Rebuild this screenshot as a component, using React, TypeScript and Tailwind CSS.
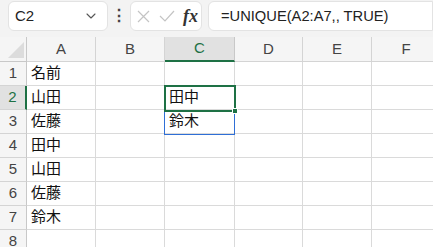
import { ChevronDown } from "lucide-react";

const COLS = [
  { key: "A", w: "w-[69px]" },
  { key: "B", w: "w-[69px]" },
  { key: "C", w: "w-[70px]" },
  { key: "D", w: "w-[68px]" },
  { key: "E", w: "w-[69px]" },
  { key: "F", w: "w-[69px]" },
];

const ROWS: Record<number, Record<string, string>> = {
  1: { A: "名前" },
  2: { A: "山田", C: "田中" },
  3: { A: "佐藤", C: "鈴木" },
  4: { A: "田中" },
  5: { A: "山田" },
  6: { A: "佐藤" },
  7: { A: "鈴木" },
  8: {},
};

const cellFont = {
  fontFamily: '"Noto Sans CJK JP", "Liberation Sans", sans-serif',
};

function FormulaBar() {
  return (
    <div className="h-[37px] bg-[#f3f3f3] flex items-start pt-px pl-2 gap-0">
      <div className="w-[100px] h-[30px] bg-white border border-[#e3e3e3] rounded-md flex items-center justify-between pl-[6px] pr-[8px]">
        <span className="text-[15px] text-[#222]">C2</span>
        <ChevronDown className="w-4 h-4 text-[#555]" strokeWidth={1.6} />
      </div>
      <div className="w-[22px] h-[30px] flex items-center justify-center text-[#444] text-[16px] font-bold leading-none">
        ⋮
      </div>
      <div className="w-[72px] h-[30px] bg-white border border-[#e3e3e3] rounded-md flex items-center pl-[6px] gap-[9px]">
        <svg width="13" height="13" viewBox="0 0 13 13" className="text-[#c4c4c4]">
          <path d="M1 1 L12 12 M12 1 L1 12" stroke="currentColor" strokeWidth="1.2" fill="none" />
        </svg>
        <svg width="16" height="12" viewBox="0 0 16 12" className="text-[#c4c4c4]">
          <path d="M1 6 L6 11 L15 1" stroke="currentColor" strokeWidth="1.2" fill="none" />
        </svg>
        <span
          className="text-[18px] italic font-semibold text-[#333] -ml-[1px] leading-none"
          style={{ fontFamily: '"Liberation Serif", serif' }}
        >
          fx
        </span>
      </div>
      <div className="ml-[6px] flex-1 h-[30px] bg-white border border-[#e3e3e3] rounded-l-md flex items-center pl-[12px]">
        <span className="text-[14.7px] text-[#222]">=UNIQUE(A2:A7,, TRUE)</span>
      </div>
    </div>
  );
}

function HeaderRow() {
  return (
    <div className="flex h-[25px] bg-[#f5f5f5]">
      <div className="w-[27px] shrink-0 border-r border-b border-[#c8c8c8] relative">
        <svg width="16" height="16" viewBox="0 0 16 16" className="absolute right-[2px] bottom-[3px]">
          <path d="M16 0 L16 16 L0 16 Z" fill="#dcdcdc" />
        </svg>
      </div>
      {COLS.map((c) => (
        <div
          key={c.key}
          className={`${c.w} shrink-0 flex items-center justify-center text-[15px] border-r ${
            c.key === "C"
              ? "bg-[#e1e1e1] border-b-2 border-b-[#1e7145] text-[#1e7145] border-r-[#c8c8c8]"
              : "border-b border-[#d4d4d4] text-[#444]"
          }`}
        >
          {c.key}
        </div>
      ))}
    </div>
  );
}

function Row({ n }: { n: number }) {
  const data = ROWS[n];
  const selected = n === 2;
  return (
    <div className="flex h-[24px]">
      <div
        className={`w-[27px] shrink-0 flex items-center justify-center text-[15px] border-b border-[#d4d4d4] ${
          selected
            ? "bg-[#e1e1e1] text-[#1e7145] border-r-2 border-r-[#1e7145]"
            : "bg-[#f5f5f5] text-[#444] border-r border-r-[#c8c8c8]"
        }`}
      >
        {n}
      </div>
      {COLS.map((c) => (
        <div
          key={c.key}
          className={`${c.w} shrink-0 border-r border-b border-[#dadada] flex items-end pb-[2px] pl-[4px] text-[15px] text-[#111]`}
          style={cellFont}
        >
          {data[c.key] ?? ""}
        </div>
      ))}
    </div>
  );
}

export default function App() {
  return (
    <div className="w-[433px] h-[247px] overflow-hidden bg-white" style={{ fontFamily: '"Liberation Sans", Arial, sans-serif' }}>
      <FormulaBar />
      <div className="relative">
        <HeaderRow />
        {[1, 2, 3, 4, 5, 6, 7, 8].map((n) => (
          <Row key={n} n={n} />
        ))}
        {/* spill range C2:C3 */}
        <div className="absolute left-[164px] top-[49px] w-[71px] h-[49px] border border-[#2f6fd6] pointer-events-none" />
        {/* active cell C2 */}
        <div className="absolute left-[164px] top-[48px] w-[72px] h-[27px] border-2 border-[#1e7145] pointer-events-none" />
        {/* fill handle */}
        <div className="absolute left-[232px] top-[71px] w-[6px] h-[6px] bg-[#1e7145] border border-white" />
      </div>
    </div>
  );
}
